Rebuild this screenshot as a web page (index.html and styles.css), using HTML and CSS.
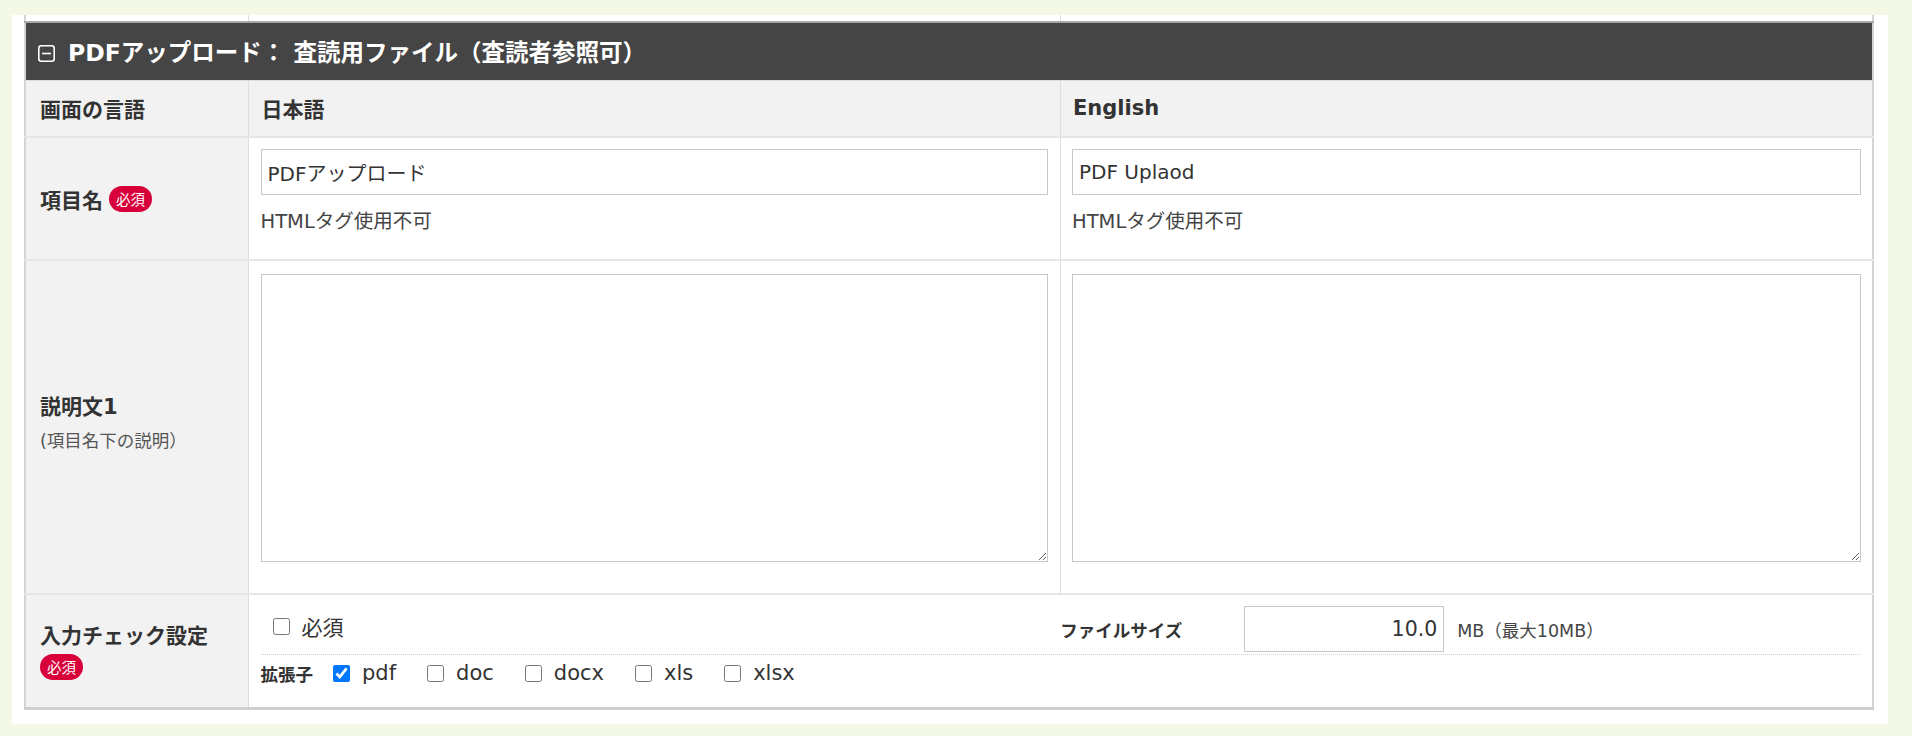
FILE: index.html
```html
<!DOCTYPE html>
<html lang="ja">
<head>
<meta charset="utf-8">
<title>PDFアップロード設定</title>
<link rel="stylesheet" href="styles.css">
</head>
<body>
<div class="panel">
  <table class="form">
    <colgroup><col class="c1"><col class="c2"><col class="c3"></colgroup>
    <tr class="prev"><td class="head"></td><td></td><td></td></tr>
    <tr class="section">
      <th colspan="3"><span class="toggle"><svg width="17" height="17" viewBox="0 0 17 17"><rect x="0.8" y="0.8" width="15.4" height="15.4" rx="2.5" fill="none" stroke="#fff" stroke-width="1.6"/><line x1="4" y1="8.5" x2="13" y2="8.5" stroke="#fff" stroke-width="1.6"/></svg></span>PDFアップロード： 査読用ファイル（査読者参照可）</th>
    </tr>
    <tr class="lang">
      <th class="head">画面の言語</th><th class="langh">日本語</th><th class="langh en">English</th>
    </tr>
    <tr class="name">
      <th class="head">項目名<span class="req">必須</span></th>
      <td><input class="text" type="text" value="PDFアップロード"><p class="note">HTMLタグ使用不可</p></td>
      <td class="en"><input class="text" type="text" value="PDF Uplaod"><p class="note">HTMLタグ使用不可</p></td>
    </tr>
    <tr class="desc">
      <th class="head desc-h"><div class="lbl">説明文1</div><div class="sub">(項目名下の説明）</div></th>
      <td><textarea class="area"></textarea></td>
      <td class="en"><textarea class="area"></textarea></td>
    </tr>
    <tr class="check">
      <th class="head"><div class="lbl">入力チェック設定</div><span class="req block">必須</span></th>
      <td colspan="2">
        <div class="line1">
          <div class="half first"><label class="cb"><input type="checkbox">必須</label></div>
          <div class="half size"><span class="size-lbl">ファイルサイズ</span><input class="num" type="text" value="10.0"><span class="unit">MB（最大10MB）</span></div>
        </div>
        <div class="line2">
          <span class="ext-lbl">拡張子</span>
          <label class="cb"><input type="checkbox" checked>pdf</label>
          <label class="cb"><input type="checkbox">doc</label>
          <label class="cb"><input type="checkbox">docx</label>
          <label class="cb"><input type="checkbox">xls</label>
          <label class="cb"><input type="checkbox">xlsx</label>
        </div>
      </td>
    </tr>
  </table>
</div>
</body>
</html>
```

FILE: styles.css
```css
html, body {
  margin: 0;
  padding: 0;
}
body {
  background: #f3f8e7;
  font-family: "DejaVu Sans", "Noto Sans CJK JP", sans-serif;
  color: #333;
  font-size: 20px;
}
.panel {
  background: #fff;
  margin: 15px 24px 0 12px;
  padding: 0 14px 14px 12px;
}
.form {
  width: 100%;
  table-layout: fixed;
  border-collapse: collapse;
  border-left: 2px solid #d4d4d4;
  border-right: 2px solid #d4d4d4;
  border-bottom: 3px solid #cfcfcf;
}
.c1 { width: 223px; }
.form th, .form td {
  border: 1px solid #dedede;
  padding: 0;
  text-align: left;
}
.form tr.prev td { background: #fff; border-top: none; }
.form tr.prev { height: 7px; }
.form tr.section { height: 58px; }
.form tr.section th {
  background: #454545;
  color: #fff;
  font-weight: bold;
  font-size: 23.5px;
  padding-left: 12px;
  border-top: 2px solid #a8a8a8;
  border-left: none;
  border-right: none;
  vertical-align: middle;
}
.toggle {
  display: inline-block;
  width: 17px;
  height: 17px;
  margin-right: 13px;
  vertical-align: -1px;
}
.toggle svg { display: block; }
.form tr.lang { height: 57px; }
.form th.head {
  background: #f2f2f2;
  font-size: 21px;
  font-weight: bold;
  padding-left: 14px;
  vertical-align: middle;
}
.form th.desc-h { padding-bottom: 10px; }
.form th.langh {
  background: #f2f2f2;
  font-size: 21px;
  font-weight: bold;
  padding-left: 13px;
  vertical-align: middle;
}
.form th.langh.en { padding-left: 12px; }
.form tr.lang th, .form tr.name td, .form tr.name th, .form tr.desc td, .form tr.desc th {
  border-bottom: 2px solid #e6e6e6;
}
.form tr.name { height: 123px; }
.form tr.name td, .form tr.desc td {
  vertical-align: top;
  padding: 11px 12px 0 12px;
}
.form tr.name td.en, .form tr.desc td.en { padding-left: 11px; padding-right: 11px; }
.req {
  display: inline-block;
  background: #d7003a;
  color: #fff;
  font-family: "Noto Sans CJK JP", sans-serif;
  font-weight: normal;
  font-size: 14.5px;
  line-height: 20px;
  padding: 3px 7px;
  border-radius: 13px;
  margin-left: 6px;
  vertical-align: 3px;
}
.req.block { margin-left: 0; margin-top: 3px; }
.text {
  display: block;
  box-sizing: border-box;
  width: 100%;
  height: 46px;
  border: 1px solid #c8c8c8;
  padding: 0 6px;
  font-family: inherit;
  font-size: 20px;
  color: #333;
  margin: 0;
}
.note {
  margin: 12px 0 0;
  font-size: 19.5px;
  line-height: 30px;
  color: #444;
}
.form tr.desc { height: 334px; }
.form tr.desc td { padding-top: 13px; }
.area {
  display: block;
  box-sizing: border-box;
  width: 100%;
  height: 288px;
  border: 1px solid #c8c8c8;
  margin: 0;
  font-family: inherit;
  font-size: 20px;
}
.lbl { line-height: 30px; }
.sub {
  font-weight: normal;
  font-size: 17.5px;
  color: #555;
  margin-top: 5px;
}
.form tr.check { height: 114px; }
.form tr.check td {
  vertical-align: top;
  padding: 11px 12px 0 12px;
}
.line1 {
  display: grid;
  grid-template-columns: 1fr 1fr;
  height: 48px;
  border-bottom: 1px dotted #cfcfcf;
}
.half {
  display: flex;
  align-items: center;
  height: 46px;
}
.half.first { padding-left: 12px; padding-bottom: 6px; box-sizing: border-box; }
.cb {
  display: inline-flex;
  align-items: center;
  font-size: 21px;
  color: #333;
  margin-right: 31px;
}
.cb input {
  width: 17px;
  height: 17px;
  margin: 0 12px 0 0;
}
.size-lbl {
  width: 184px;
  font-size: 17.5px;
  font-weight: bold;
}
.num {
  box-sizing: border-box;
  width: 200px;
  height: 46px;
  border: 1px solid #c8c8c8;
  margin: 0;
  padding: 0 6px;
  text-align: right;
  font-family: inherit;
  font-size: 20.5px;
  color: #333;
}
.unit {
  font-size: 17.5px;
  margin-left: 13px;
  color: #444;
}
.line2 {
  display: flex;
  align-items: center;
  height: 36px;
}
.ext-lbl {
  font-size: 17.5px;
  font-weight: bold;
  margin-right: 20px;
}
```
